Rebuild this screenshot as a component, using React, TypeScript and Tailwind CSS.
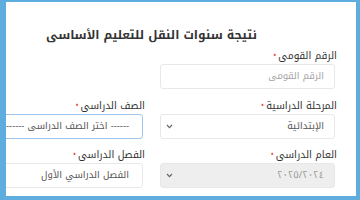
import React from "react"

const font = { fontFamily: '"Noto Kufi Arabic", "Noto Sans Arabic", "DejaVu Sans", sans-serif' }

function Chevron() {
  return (
    <svg width="7" height="5" viewBox="0 0 7 5" className="shrink-0">
      <polyline points="1,1 3.5,3.6 6,1" fill="none" stroke="#666" strokeWidth="1.2" />
    </svg>
  )
}

function Label({ text }: { text: string }) {
  return (
    <div className="flex items-center h-[17px] pt-[1px] -mr-[2px] text-[10px] leading-[14px] text-[#333]">
      <span>{text}</span>
      <span className="text-[#e74c3c] text-[8px] mr-[2px]">•</span>
    </div>
  )
}

function Field({
  label,
  value,
  placeholder,
  select,
  disabled,
  focused,
  pad = "pr-[10px]",
}: {
  label: string
  value?: string
  placeholder?: string
  select?: boolean
  disabled?: boolean
  focused?: boolean
  pad?: string
}) {
  return (
    <div>
      <Label text={label} />
      <div
        className={`h-[25px] rounded-[3px] border flex items-center justify-between ${pad} pl-[5px] text-[9.5px] ${
          focused ? "border-[#9fc6ee]" : "border-[#e8e8e8]"
        } ${disabled ? "bg-[#eeeeee]" : "bg-white"}`}
      >
        <span className={value ? (disabled ? "text-[#999]" : "text-[#555]") : "text-[#a5a5a5]"}>
          {value || placeholder}
        </span>
        {select && <Chevron />}
      </div>
    </div>
  )
}

export default function App() {
  return (
    <div className="w-[360px] h-[200px] bg-[#5fadde] pl-[6px] pr-[4px] pt-[2px] pb-[4px]" style={font}>
      <div dir="rtl" className="h-full bg-white overflow-hidden pr-[21px] pt-[21px]">
        <div className="w-[367px] shrink-0">
          <h1 className="text-center text-[12px] leading-[24px] font-bold text-[#333]">
            نتيجة سنوات النقل للتعليم الأساسى
          </h1>
          <div className="grid grid-cols-[175px_175px] gap-x-[17px] gap-y-[7.5px]">
            <Field label="الرقم القومى" placeholder="الرقم القومى" />
            <div />
            <Field label="المرحلة الدراسية" value="الإبتدائية" select />
            <Field label="الصف الدراسى" value="------ اختر الصف الدراسى ------" select focused pad="pr-[13px]" />
            <Field label="العام الدراسى" value="٢٠٢٥/٢٠٢٤" select disabled />
            <Field label="الفصل الدراسى" value="الفصل الدراسي الأول" select pad="pr-[13px]" />
          </div>
        </div>
      </div>
    </div>
  )
}
